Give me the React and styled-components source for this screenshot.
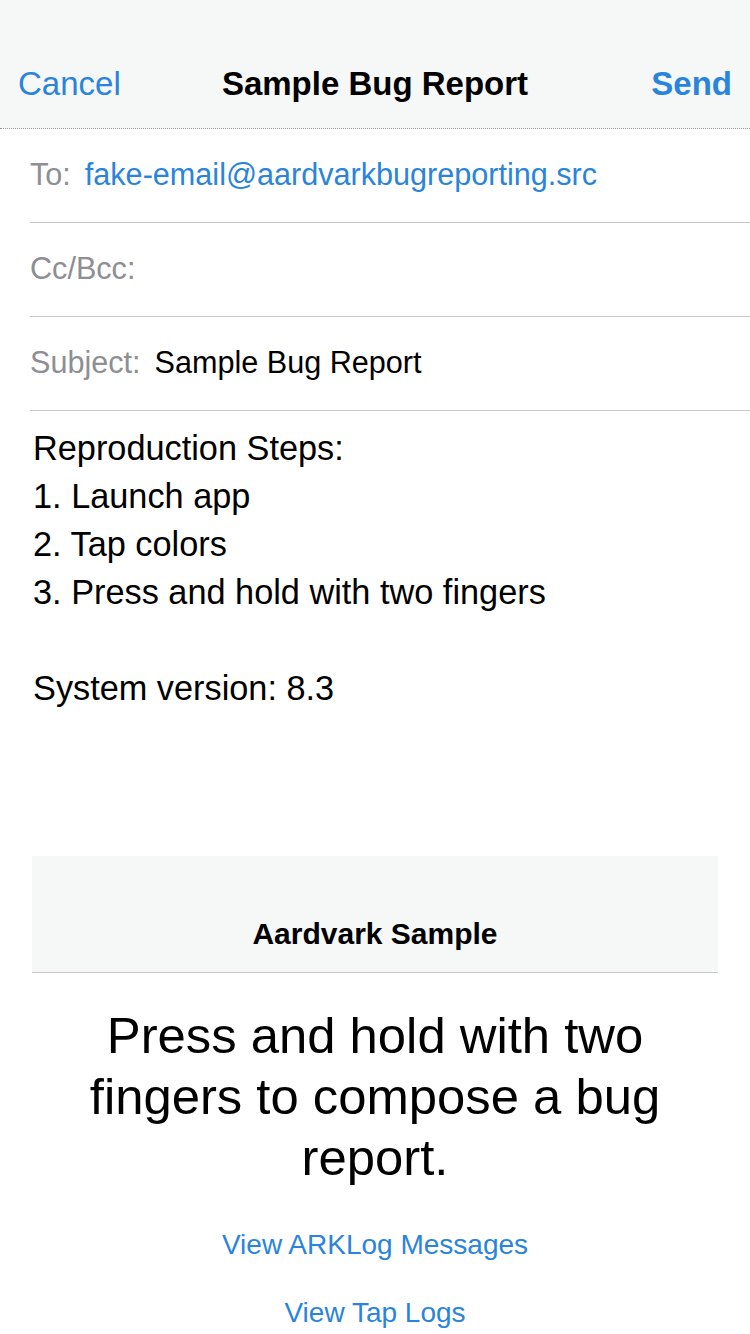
import React from "react";
import styled, { createGlobalStyle } from "styled-components";

const GlobalStyle = createGlobalStyle`
  html, body {
    margin: 0;
    padding: 0;
    background: #ffffff;
  }
  body {
    font-family: "Liberation Sans", Arial, Helvetica, sans-serif;
    -webkit-font-smoothing: antialiased;
  }
`;

const BLUE = "#2a84dc";

const Screen = styled.div`
  width: 750px;
  height: 1334px;
  overflow: hidden;
  display: flex;
  flex-direction: column;
  background: #ffffff;
  color: #000000;
`;

const NavBar = styled.header`
  box-sizing: border-box;
  height: 129px;
  padding: 40px 18px 0;
  background: #f6f7f7;
  border-bottom: 1px dotted #9a9a9a;
  display: grid;
  grid-template-columns: 1fr auto 1fr;
  align-items: center;
`;

const NavButton = styled.span`
  font-size: 33px;
  color: ${BLUE};
  font-weight: ${(p) => (p.$bold ? 700 : 400)};
  justify-self: ${(p) => (p.$right ? "end" : "start")};
`;

const NavTitle = styled.span`
  font-size: 33px;
  font-weight: 700;
  color: #000;
`;

const FieldRow = styled.div`
  box-sizing: border-box;
  height: 94px;
  margin-left: 30px;
  border-bottom: 1px solid #c8c7cc;
  display: flex;
  align-items: center;
  gap: 14px;
  font-size: 30.6px;
  padding-bottom: 2px;
`;

const FieldLabel = styled.span`
  color: #8e8e93;
`;

const FieldValue = styled.span`
  color: ${(p) => (p.$link ? BLUE : "#000")};
`;

const Body = styled.div`
  padding: 13px 33px 0;
  font-size: 34.3px;
  line-height: 48px;
  white-space: pre-line;
`;

const Embedded = styled.section`
  margin: 144px 32px 0;
  display: flex;
  flex-direction: column;
  align-items: center;
`;

const EmbeddedNav = styled.div`
  box-sizing: border-box;
  width: 100%;
  height: 117px;
  padding-top: 40px;
  background: #f6f7f7;
  border-bottom: 1px solid #c8c8c8;
  display: flex;
  align-items: center;
  justify-content: center;
  font-size: 30px;
  font-weight: 700;
`;

const Headline = styled.p`
  margin: 32px 0 0;
  width: 100%;
  font-size: 50.8px;
  line-height: 61px;
  text-align: center;
`;

const LinkList = styled.div`
  margin-top: 37px;
  display: flex;
  flex-direction: column;
  align-items: center;
  gap: 28px;
`;

const LinkButton = styled.span`
  font-size: 28px;
  line-height: 40px;
  color: ${BLUE};
`;

const bodyText = `Reproduction Steps:
1. Launch app
2. Tap colors
3. Press and hold with two fingers

System version: 8.3`;

export default function App() {
  return (
    <>
      <GlobalStyle />
      <Screen>
        <NavBar>
          <NavButton>Cancel</NavButton>
          <NavTitle>Sample Bug Report</NavTitle>
          <NavButton $bold $right>
            Send
          </NavButton>
        </NavBar>
        <FieldRow>
          <FieldLabel>To:</FieldLabel>
          <FieldValue $link>fake-email@aardvarkbugreporting.src</FieldValue>
        </FieldRow>
        <FieldRow>
          <FieldLabel>Cc/Bcc:</FieldLabel>
        </FieldRow>
        <FieldRow>
          <FieldLabel>Subject:</FieldLabel>
          <FieldValue>Sample Bug Report</FieldValue>
        </FieldRow>
        <Body>{bodyText}</Body>
        <Embedded>
          <EmbeddedNav>Aardvark Sample</EmbeddedNav>
          <Headline>
            Press and hold with two fingers to compose a bug report.
          </Headline>
          <LinkList>
            <LinkButton>View ARKLog Messages</LinkButton>
            <LinkButton>View Tap Logs</LinkButton>
          </LinkList>
        </Embedded>
      </Screen>
    </>
  );
}
